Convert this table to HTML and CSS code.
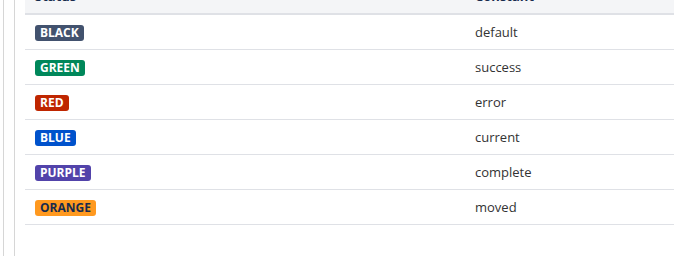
FILE: index.html
```html
<!DOCTYPE html>
<html lang="en">
<head>
    <meta charset="UTF-8">
    <meta name="viewport" content="width=device-width, initial-scale=1.0">
    <title>Status lozenges</title>
    <link rel="stylesheet" href="styles.css">
</head>
<body>
    <div class="page-frame">
        <div class="page-inner">
            <table class="status-table">
                <thead>
                    <tr>
                        <th class="col-status">Status</th>
                        <th>Constant</th>
                    </tr>
                </thead>
                <tbody>
                    <tr>
                        <td><span class="lozenge lozenge-black">Black</span></td>
                        <td>default</td>
                    </tr>
                    <tr>
                        <td><span class="lozenge lozenge-green">Green</span></td>
                        <td>success</td>
                    </tr>
                    <tr>
                        <td><span class="lozenge lozenge-red">Red</span></td>
                        <td>error</td>
                    </tr>
                    <tr>
                        <td><span class="lozenge lozenge-blue">Blue</span></td>
                        <td>current</td>
                    </tr>
                    <tr>
                        <td><span class="lozenge lozenge-purple">Purple</span></td>
                        <td>complete</td>
                    </tr>
                    <tr>
                        <td><span class="lozenge lozenge-orange">Orange</span></td>
                        <td>moved</td>
                    </tr>
                </tbody>
            </table>
        </div>
    </div>
</body>
</html>
```

FILE: styles.css
```css
body{
    margin: 0;
    font-family: "Open Sans", "Noto Sans", sans-serif;
    color: #333;
    background: #fff;
    overflow: hidden;
}
.page-frame{
    margin-left: 3px;
    border-left: 1px solid #d6d6d6;
    min-height: 100vh;
    display: flow-root;
}
.page-inner{
    margin-left: 10px;
    border-left: 1px solid #d6d6d6;
    min-height: 100vh;
    padding-left: 10px;
    display: flow-root;
}
.status-table{
    border-collapse: collapse;
    width: 700px;
    margin-top: -20px;
    font-size: 13px;
}
.status-table th{
    background-color: #f4f5f7;
    text-align: left;
    font-weight: bold;
    padding: 6px 10px 8px;
    height: 19px;
    border-bottom: 2px solid #dfe1e6;
    color: #172b4d;
}
.col-status{
    width: 420px;
}
.status-table td{
    height: 35px;
    padding: 0 10px;
    border-bottom: 1px solid #dfe1e6;
    box-sizing: border-box;
}
.lozenge{
    display: inline-block;
    text-transform: uppercase;
    font-weight: bold;
    font-size: 12px;
    line-height: 16px;
    padding: 0 5px;
    border-radius: 3px;
    color: #fff;
}
.lozenge-black{ background-color: #42526e; }
.lozenge-green{ background-color: #00875a; }
.lozenge-red{ background-color: #bf2600; }
.lozenge-blue{ background-color: #0052cc; }
.lozenge-purple{ background-color: #5243aa; }
.lozenge-orange{ background-color: #ff991f; color: #172b4d; }
```
